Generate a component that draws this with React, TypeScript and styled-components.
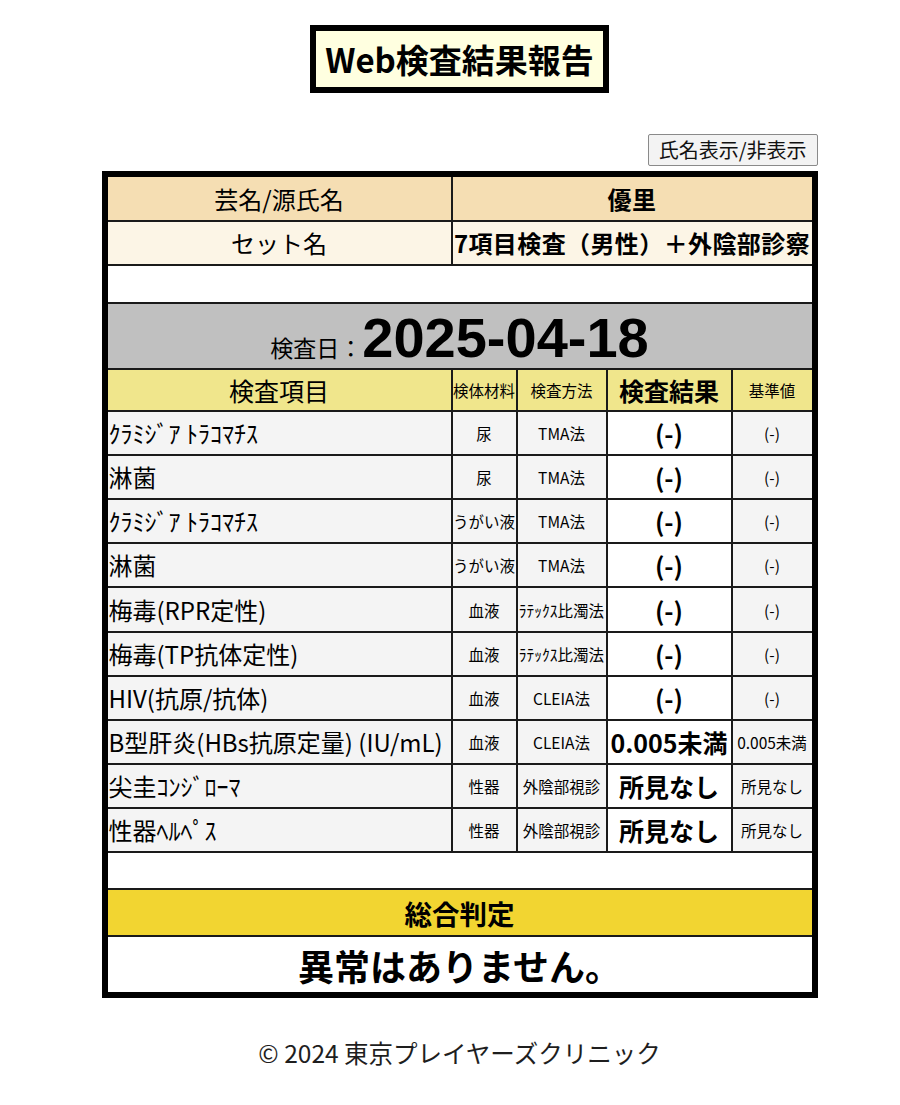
import React from "react";
import styled, { createGlobalStyle } from "styled-components";

const GlobalStyle = createGlobalStyle`
  html, body { margin: 0; padding: 0; background: #ffffff; }
  body {
    font-family: "Noto Sans CJK JP", "Noto Sans", sans-serif;
    color: #000000;
  }
`;

const Page = styled.div`
  width: 900px;
  box-sizing: border-box;
  padding: 25px 0 0 19px;
  display: flex;
  flex-direction: column;
  align-items: center;
`;

const TitleBox = styled.h1`
  margin: 0;
  border: 6px solid #000;
  background: #ffffe0;
  font-size: 33px;
  font-weight: 700;
  line-height: 56px;
  padding: 0 9px;
  white-space: nowrap;
`;

const Report = styled.div`
  width: 716px;
  margin-top: 41px;
  display: flex;
  flex-direction: column;
`;

const Toolbar = styled.div`
  display: flex;
  justify-content: flex-end;
  margin-bottom: 5px;
`;

const ToggleButton = styled.button`
  font-family: "Noto Sans CJK JP", sans-serif;
  font-size: 20px;
  line-height: 22px;
  height: 32px;
  padding: 0 10px;
  background: #f3f3f3;
  color: #111;
  border: 1px solid #8a8a8a;
  border-radius: 2px;
`;

const Frame = styled.div`
  border: 6px solid #000;
`;

const Table = styled.table`
  width: 100%;
  border-collapse: collapse;
  border-style: hidden;
  table-layout: fixed;
`;

const Cell = styled.td<{ $bg?: string; $h?: number }>`
  border: 2px solid #1a1a1a;
  padding: 0 2px;
  background: ${(p) => p.$bg || "#ffffff"};
  height: ${(p) => (p.$h ? `${p.$h}px` : "auto")};
  text-align: center;
  vertical-align: middle;
  white-space: nowrap;
  overflow: hidden;
`;

const InfoCell = styled(Cell)<{ $bold?: boolean }>`
  font-size: 24px;
  line-height: 28px;
  font-weight: ${(p) => (p.$bold ? 700 : 400)};
  letter-spacing: ${(p) => (p.$bold ? "0.4px" : "0")};
  padding: 0;
`;

const DateCell = styled(Cell)`
  padding-top: 4px;
`;

const DateLabel = styled.span`
  font-size: 23px;
  line-height: 28px;
`;

const DateValue = styled.span`
  font-family: "Liberation Sans", Arial, sans-serif;
  font-size: 56px;
  font-weight: 700;
  line-height: 56px;
`;

const HeadCell = styled(Cell)<{ $size: "big" | "small"; $bold?: boolean }>`
  font-size: ${(p) => (p.$size === "big" ? "25px" : "15.5px")};
  line-height: 26px;
  font-weight: ${(p) => (p.$bold ? 700 : 400)};
  padding: 0;
`;

const NameCell = styled(Cell)`
  text-align: left;
  font-size: 24px;
  line-height: 28px;
  padding: 0 1px;
`;

const SmallCell = styled(Cell)`
  font-size: 15.5px;
  line-height: 20px;
  padding: 0;
`;

const ResultCell = styled(Cell)`
  font-size: 25px;
  line-height: 28px;
  font-weight: 700;
  padding: 0;
`;

const JudgeHead = styled(Cell)`
  font-size: 27.5px;
  line-height: 32px;
  font-weight: 700;
`;

const JudgeText = styled(Cell)`
  font-size: 36px;
  line-height: 42px;
  font-weight: 700;
`;

const Footer = styled.footer`
  margin-top: 40px;
  font-size: 24.5px;
  line-height: 30px;
  color: #1e1e1e;
`;

type Item = {
  name: string;
  material: string;
  method: string;
  result: string;
  reference: string;
};

const items: Item[] = [
  { name: "ｸﾗﾐｼﾞｱ ﾄﾗｺﾏﾁｽ", material: "尿", method: "TMA法", result: "(-)", reference: "(-)" },
  { name: "淋菌", material: "尿", method: "TMA法", result: "(-)", reference: "(-)" },
  { name: "ｸﾗﾐｼﾞｱ ﾄﾗｺﾏﾁｽ", material: "うがい液", method: "TMA法", result: "(-)", reference: "(-)" },
  { name: "淋菌", material: "うがい液", method: "TMA法", result: "(-)", reference: "(-)" },
  { name: "梅毒(RPR定性)", material: "血液", method: "ﾗﾃｯｸｽ比濁法", result: "(-)", reference: "(-)" },
  { name: "梅毒(TP抗体定性)", material: "血液", method: "ﾗﾃｯｸｽ比濁法", result: "(-)", reference: "(-)" },
  { name: "HIV(抗原/抗体)", material: "血液", method: "CLEIA法", result: "(-)", reference: "(-)" },
  { name: "B型肝炎(HBs抗原定量) (IU/mL)", material: "血液", method: "CLEIA法", result: "0.005未満", reference: "0.005未満" },
  { name: "尖圭ｺﾝｼﾞﾛｰﾏ", material: "性器", method: "外陰部視診", result: "所見なし", reference: "所見なし" },
  { name: "性器ﾍﾙﾍﾟｽ", material: "性器", method: "外陰部視診", result: "所見なし", reference: "所見なし" },
];

const ROW_BG = "#f4f4f4";

export default function App() {
  return (
    <>
      <GlobalStyle />
      <Page>
        <TitleBox>Web検査結果報告</TitleBox>
        <Report>
          <Toolbar>
            <ToggleButton type="button">氏名表示/非表示</ToggleButton>
          </Toolbar>
          <Frame>
            <Table>
              <colgroup>
                <col style={{ width: 344 }} />
                <col style={{ width: 65 }} />
                <col style={{ width: 90 }} />
                <col style={{ width: 125 }} />
                <col style={{ width: 80 }} />
              </colgroup>
              <tbody>
                <tr>
                  <InfoCell $bg="#f5deb3" $h={43}>芸名/源氏名</InfoCell>
                  <InfoCell $bg="#f5deb3" $bold colSpan={4}>優里</InfoCell>
                </tr>
                <tr>
                  <InfoCell $bg="#fcf5e6" $h={42}>セット名</InfoCell>
                  <InfoCell $bg="#fcf5e6" $bold colSpan={4}>7項目検査（男性）＋外陰部診察</InfoCell>
                </tr>
                <tr>
                  <Cell colSpan={5} $h={36} />
                </tr>
                <tr>
                  <DateCell colSpan={5} $bg="#c0c0c0" $h={60}>
                    <DateLabel>検査日：</DateLabel>
                    <DateValue>2025-04-18</DateValue>
                  </DateCell>
                </tr>
                <tr>
                  <HeadCell $bg="#f0e68c" $size="big" $h={40}>検査項目</HeadCell>
                  <HeadCell $bg="#f0e68c" $size="small">検体材料</HeadCell>
                  <HeadCell $bg="#f0e68c" $size="small">検査方法</HeadCell>
                  <HeadCell $bg="#f0e68c" $size="big" $bold>検査結果</HeadCell>
                  <HeadCell $bg="#f0e68c" $size="small">基準値</HeadCell>
                </tr>
                {items.map((it, i) => (
                  <tr key={i}>
                    <NameCell $bg={ROW_BG} $h={i === 4 ? 43 : 42}>{it.name}</NameCell>
                    <SmallCell $bg={ROW_BG}>{it.material}</SmallCell>
                    <SmallCell $bg={ROW_BG}>{it.method}</SmallCell>
                    <ResultCell>{it.result}</ResultCell>
                    <SmallCell $bg={ROW_BG}>{it.reference}</SmallCell>
                  </tr>
                ))}
                <tr>
                  <Cell colSpan={5} $h={35} />
                </tr>
                <tr>
                  <JudgeHead colSpan={5} $bg="#f2d531" $h={45}>総合判定</JudgeHead>
                </tr>
                <tr>
                  <JudgeText colSpan={5} $h={55}>異常はありません。</JudgeText>
                </tr>
              </tbody>
            </Table>
          </Frame>
        </Report>
        <Footer>© 2024 東京プレイヤーズクリニック</Footer>
      </Page>
    </>
  );
}
